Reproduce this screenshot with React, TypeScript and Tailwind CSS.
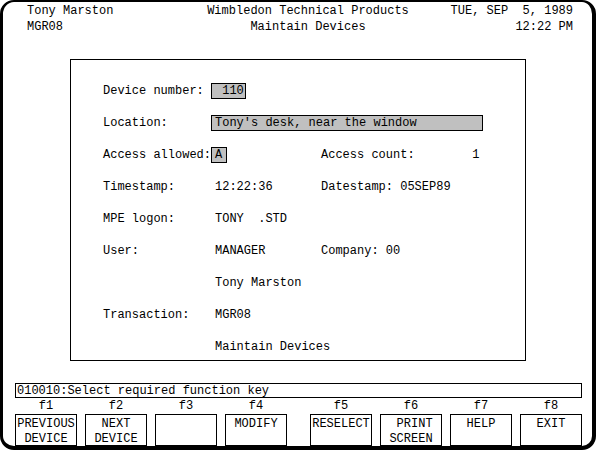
const mono = { fontFamily: '"Liberation Mono", "Courier New", monospace' };

type Row = {
  label: string;
  value?: string;
  box?: string;
  right?: string;
};

const rows: Row[] = [
  { label: "Device number:", value: " 110", box: "w-[35px]" },
  { label: "Location:", value: "Tony's desk, near the window", box: "w-[272px]" },
  { label: "Access allowed:", value: "A", box: "w-[16px]", right: "Access count:        1" },
  { label: "Timestamp:", value: "12:22:36", right: "Datestamp: 05SEP89" },
  { label: "MPE logon:", value: "TONY  .STD" },
  { label: "User:", value: "MANAGER", right: "Company: 00" },
  { label: "", value: "Tony Marston" },
  { label: "Transaction:", value: "MGR08" },
  { label: "", value: "Maintain Devices" },
];

const keys = [
  ["PREVIOUS", "DEVICE"],
  ["NEXT", "DEVICE"],
  ["", ""],
  ["MODIFY", ""],
  ["RESELECT", ""],
  [" PRINT", "SCREEN"],
  ["HELP", ""],
  ["EXIT", ""],
];

const FKey = ({ n, lines }: { n: number; lines: string[] }) => (
  <div className="flex flex-col w-[62px]">
    <div className="h-4 leading-4 text-center">f{n}</div>
    <div className="h-[32px] border border-black flex flex-col items-center pt-[2px]">
      {lines.map((l, i) => (
        <div key={i} className="h-[14px] leading-[14px] mb-[1px] whitespace-pre">
          {l}
        </div>
      ))}
    </div>
  </div>
);

export default function App() {
  return (
    <div className="w-[598px] h-[453px] bg-white text-black text-[12px]" style={mono}>
      <div className="w-[596px] h-[450px] border-l-[3px] border-t-2 border-r-4 border-b-4 border-black rounded-[14px] flex flex-col">
        {/* header */}
        <div className="flex leading-4 h-8 mt-[1px] pl-[24px]">
          <div className="w-[180px]">
            <div>Tony Marston</div>
            <div>MGR08</div>
          </div>
          <div className="w-[202px] text-center">
            <div>Wimbledon Technical Products</div>
            <div>Maintain Devices</div>
          </div>
          <div className="w-[164px] text-right whitespace-pre">
            <div>TUE, SEP  5, 1989</div>
            <div>12:22 PM</div>
          </div>
        </div>

        {/* main panel */}
        <div className="ml-[67px] mt-[24px] w-[456px] h-[302px] border border-black pt-[23px] pl-[32px] flex flex-col gap-4">
          {rows.map((r, i) => (
            <div key={i} className="flex h-4 leading-4 items-center">
              <div className="w-[108px] whitespace-pre">{r.label}</div>
              {r.box ? (
                <div className={`${r.box} h-4 border border-black bg-[#c0c0c0] pl-[3px] leading-[14px] whitespace-pre`}>
                  {r.value}
                </div>
              ) : (
                <div className="w-[110px] pl-[4px] whitespace-pre">{r.value}</div>
              )}
              {r.right && (
                <div className={`whitespace-pre ${r.box ? "ml-[94px]" : ""}`}>{r.right}</div>
              )}
            </div>
          ))}
        </div>

        {/* message line */}
        <div className="ml-[12px] mt-[22px] w-[567px] h-[15px] border border-black pl-[1px] leading-[14px]">
          010010:Select required function key
        </div>

        {/* function keys */}
        <div className="flex ml-[12px]">
          <div className="flex gap-[8px]">
            {keys.slice(0, 4).map((k, i) => (
              <FKey key={i} n={i + 1} lines={k} />
            ))}
          </div>
          <div className="flex gap-[8px] ml-[23px]">
            {keys.slice(4).map((k, i) => (
              <FKey key={i} n={i + 5} lines={k} />
            ))}
          </div>
        </div>
      </div>
    </div>
  );
}
